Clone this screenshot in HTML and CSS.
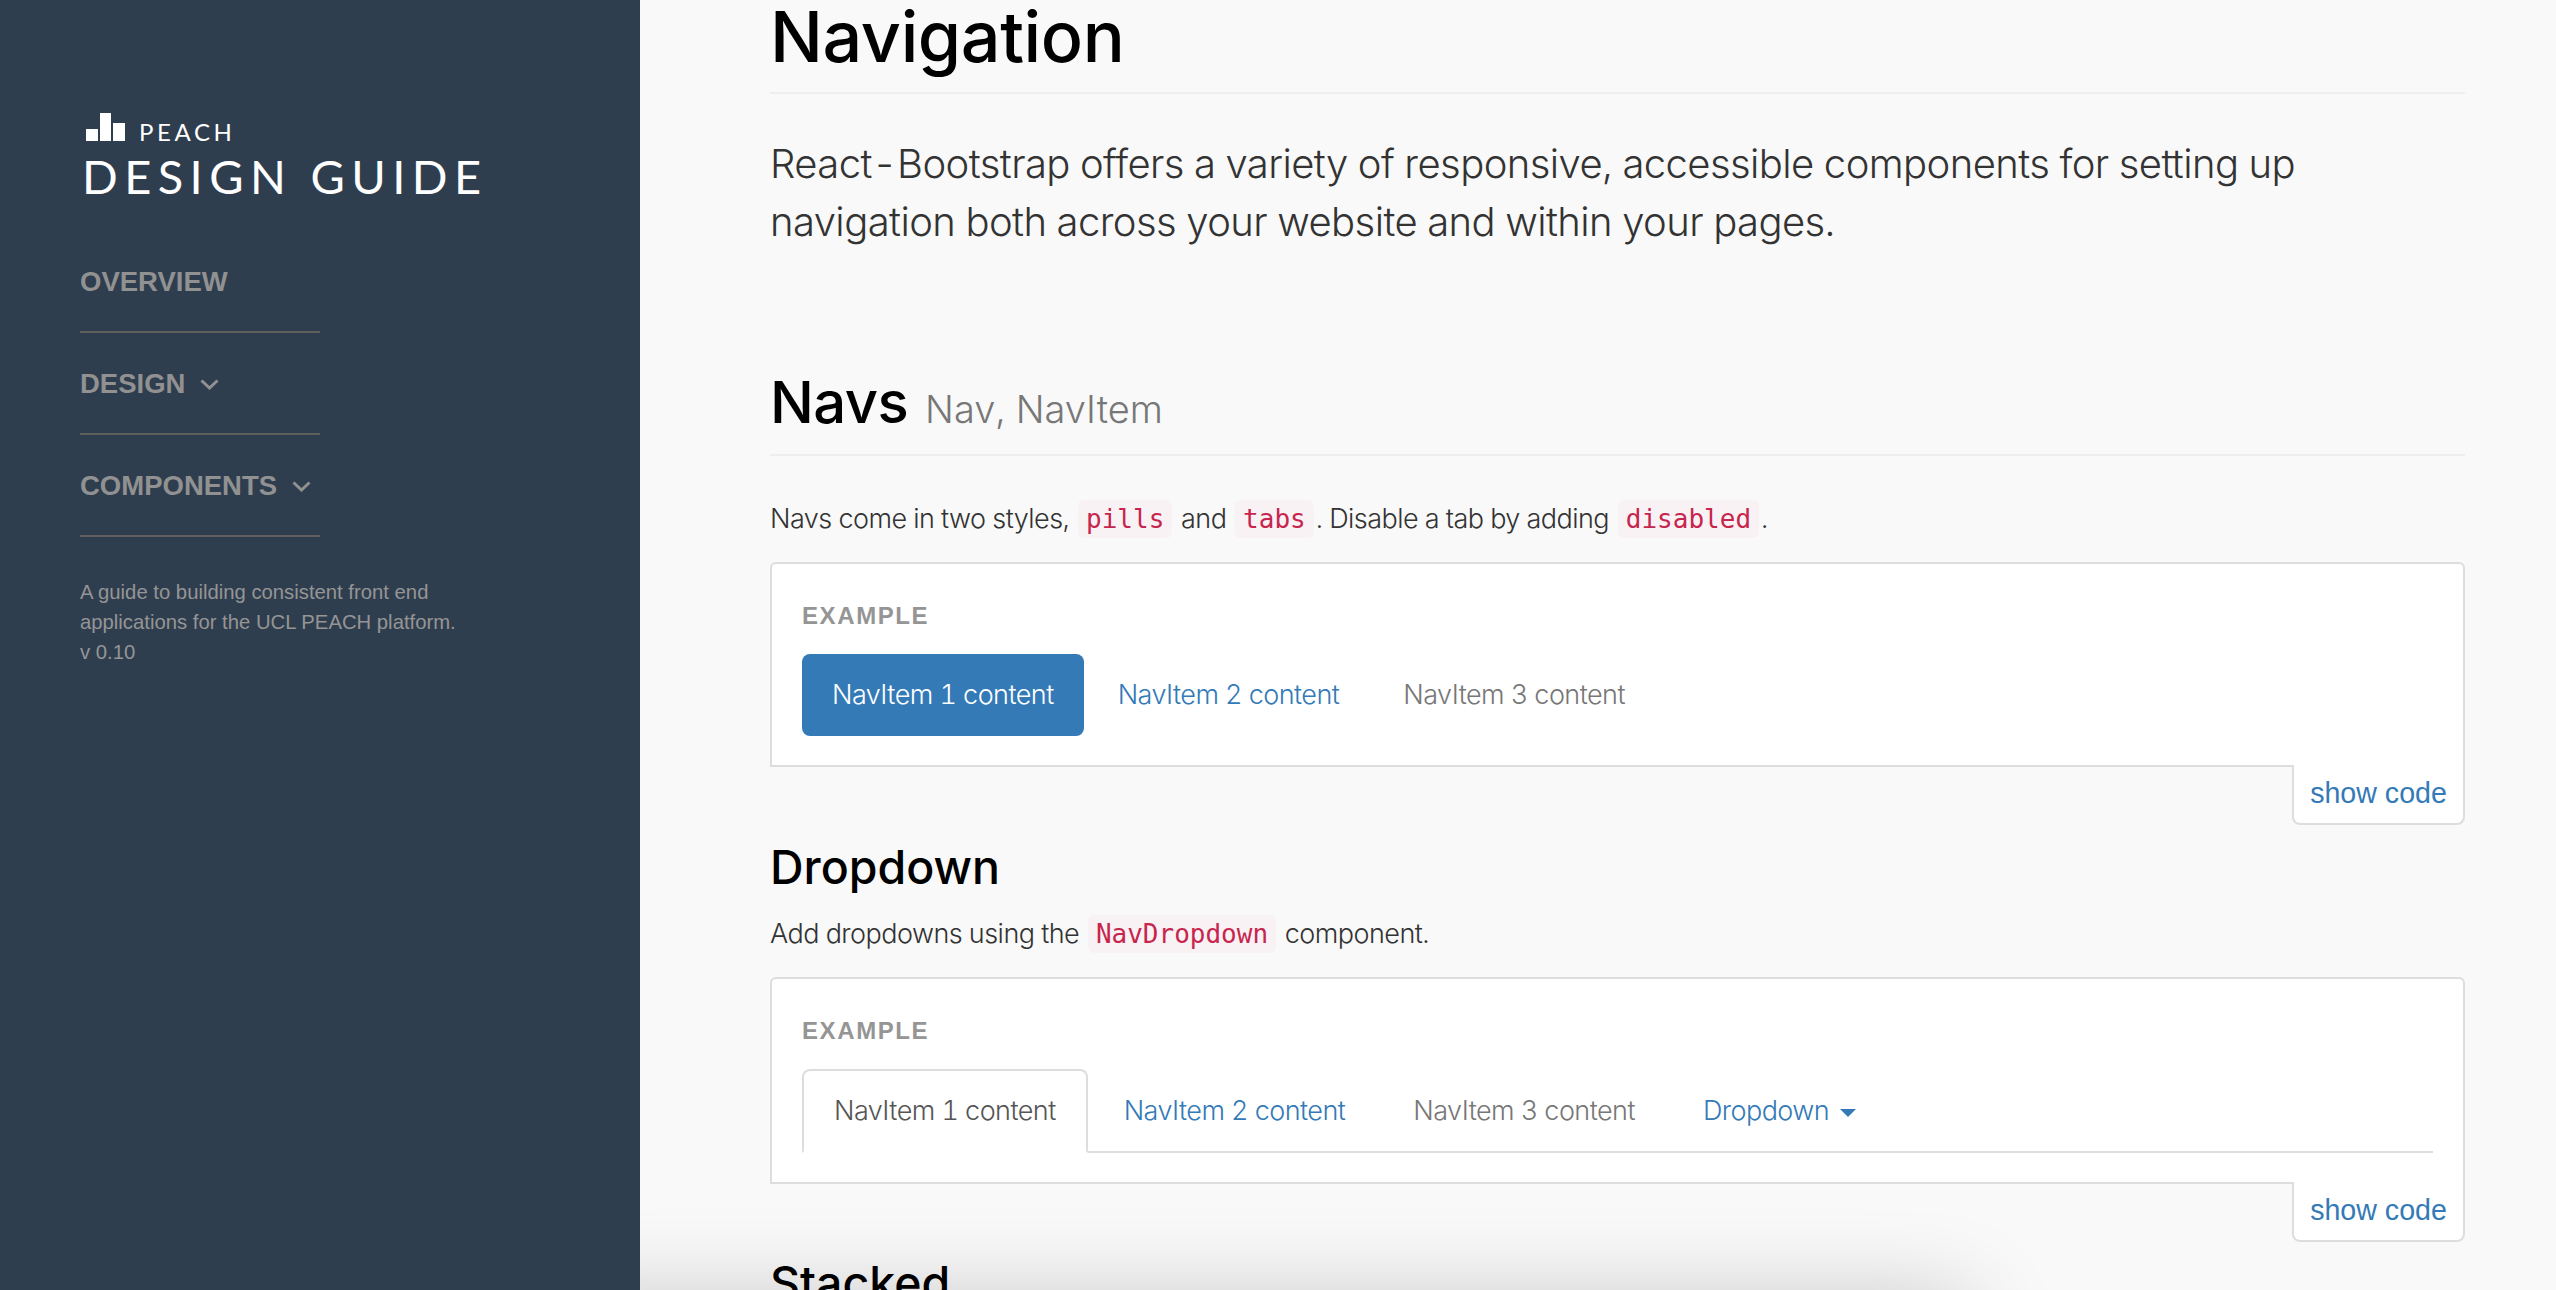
FILE: index.html
```html
<!DOCTYPE html>
<html lang="en">
<head>
<meta charset="utf-8">
<title>Navigation - Peach Design Guide</title>
<link rel="stylesheet" href="styles.css">
</head>
<body>
<div class="app">
  <aside class="sidebar">
    <div class="logo">
      <div class="logo-top">
        <svg class="logo-mark" width="40" height="28" viewBox="0 0 40 28" aria-hidden="true"><rect x="0" y="16" width="12" height="12"/><rect x="14" y="0" width="11" height="28"/><rect x="27" y="10" width="12" height="18"/></svg>
        <span class="logo-peach">PEACH</span>
      </div>
      <div class="logo-guide">DESIGN GUIDE</div>
    </div>
    <nav class="side-nav">
      <a class="side-item">OVERVIEW</a>
      <a class="side-item">DESIGN<svg class="chev" width="19" height="11" viewBox="0 0 19 11" aria-hidden="true"><path d="M1.5 1.5 9.5 9 17.5 1.5"/></svg></a>
      <a class="side-item">COMPONENTS<svg class="chev" width="19" height="11" viewBox="0 0 19 11" aria-hidden="true"><path d="M1.5 1.5 9.5 9 17.5 1.5"/></svg></a>
    </nav>
    <p class="side-note">A guide to building consistent front end<br>applications for the UCL PEACH platform.<br>v 0.10</p>
  </aside>
  <main class="main">
    <h1 class="page-title">Navigation</h1>
    <p class="lead">React-Bootstrap offers a variety of responsive, accessible components for setting up navigation both across your website and within your pages.</p>
    <h2 class="section-title">Navs <small>Nav, NavItem</small></h2>
    <p class="copy">Navs come in two styles, <code>pills</code> and <code>tabs</code>. Disable a tab by adding <code>disabled</code>.</p>
    <section class="example">
      <div class="example-label">EXAMPLE</div>
      <ul class="pills">
        <li class="pill active">NavItem 1 content</li>
        <li class="pill link">NavItem 2 content</li>
        <li class="pill muted">NavItem 3 content</li>
      </ul>
    </section>
    <div class="code-row"><a class="show-code">show code</a></div>
    <h3 class="sub-title">Dropdown</h3>
    <p class="copy copy-sub">Add dropdowns using the <code>NavDropdown</code> component.</p>
    <section class="example">
      <div class="example-label">EXAMPLE</div>
      <ul class="tabs">
        <li class="tab active">NavItem 1 content</li>
        <li class="tab link">NavItem 2 content</li>
        <li class="tab muted">NavItem 3 content</li>
        <li class="tab link">Dropdown<span class="caret"></span></li>
      </ul>
    </section>
    <div class="code-row"><a class="show-code">show code</a></div>
    <h3 class="sub-title stacked">Stacked</h3>
  </main>
</div>
<div class="bottom-shadow"></div>
</body>
</html>
```
FILE: styles.css
```css
* { box-sizing: border-box; }
html, body { margin: 0; height: 100%; overflow: hidden; }
body { background: #f9f9f9; font-family: "Liberation Sans", Arial, sans-serif; color: #333; }
.app { display: flex; height: 1290px; overflow: hidden; }

.sidebar { flex: 0 0 640px; background: #2f3e4f; padding: 113px 0 0 80px; position: relative; z-index: 2; }
.logo-top { display: flex; align-items: flex-end; margin-left: 6px; height: 28px; }
.logo-mark { fill: #fff; display: block; flex: none; }
.logo-peach { color: #fff; font-family: Lato, sans-serif; font-size: 24px; line-height: 18px; letter-spacing: 3.6px; margin-left: 13px; }
.logo-guide { color: #fff; font-family: Lato, sans-serif; font-size: 47px; line-height: 34px; letter-spacing: 6.4px; margin: 18px 0 0 2px; white-space: nowrap; }
.side-nav { display: flex; flex-direction: column; width: 240px; margin-top: 38px; }
.side-item { display: flex; align-items: center; height: 102px; padding-top: 2px; border-bottom: 2px solid #5f5f5f; color: #919191; font-weight: 700; font-size: 27.5px; white-space: nowrap; }
.chev { margin-left: 15px; flex: none; fill: none; stroke: #919191; stroke-width: 3; }
.side-note { margin: 40px 0 0; color: #959595; font-size: 20.3px; line-height: 30px; white-space: nowrap; }

.main { flex: 1; padding: 0 91px 0 130px; min-width: 0; font-family: Inter, "Liberation Sans", sans-serif; font-weight: 300; font-variant-numeric: tabular-nums; }
.page-title { margin: 0; height: 94px; border-bottom: 2px solid #eee; font-weight: 500; font-size: 70px; line-height: 74px; letter-spacing: -0.4px; color: #000; }
.lead { margin: 41px 0 0; font-size: 40px; line-height: 57.6px; letter-spacing: -0.58px; color: #333; }
.section-title { margin: 116px 0 0; height: 90px; border-bottom: 2px solid #eee; font-weight: 500; font-size: 58px; line-height: 72px; letter-spacing: -0.6px; color: #000; }
.section-title small { font-weight: 300; font-size: 38px; letter-spacing: 0; color: #777; margin-left: 2px; }
.copy { margin: 43px 0 0; font-size: 27px; line-height: 40px; letter-spacing: -0.54px; color: #333; }
.copy-sub { margin-top: 21px; }
code { font-family: "DejaVu Sans Mono", monospace; font-weight: 400; font-size: 26px; letter-spacing: 0; color: #c7254e; background: #f9f2f4; border-radius: 6px; padding: 4px 8px; margin: 0 2px; }
.example { margin-top: 23px; background: #fff; border: 2px solid #ddd; border-radius: 6px 6px 0 0; padding: 38px 30px 29px; }
.example-label { font-family: "Liberation Sans", sans-serif; font-weight: 700; font-size: 24px; line-height: 28px; letter-spacing: 1.6px; color: #959595; margin-bottom: 24px; }
.pills, .tabs { list-style: none; display: flex; margin: 0; padding: 0; font-size: 27px; letter-spacing: -0.55px; }
.pill { height: 82px; line-height: 82px; padding: 0 30px; border-radius: 8px; margin-right: 4px; }
.pill.active { background: #337ab7; color: #fff; }
.link { color: #337ab7; }
.muted { color: #777; }
.tabs { border-bottom: 2px solid #ddd; height: 84px; }
.tab { height: 84px; line-height: 80px; padding: 0 30px; margin-right: 4px; border: 2px solid transparent; border-radius: 8px 8px 0 0; }
.tab.active { background: #fff; border-color: #ddd; border-bottom-color: #fff; color: #555; }
.caret { display: inline-block; vertical-align: middle; margin-left: 11px; border-top: 8px solid #337ab7; border-left: 8px solid transparent; border-right: 8px solid transparent; }
.code-row { display: flex; justify-content: flex-end; margin-top: -2px; }
.show-code { position: relative; width: 173px; height: 60px; line-height: 57px; text-align: center; background: #fff; border: 2px solid #ddd; border-top: 0; border-radius: 0 0 8px 8px; color: #337ab7; font-family: "Liberation Sans", sans-serif; font-size: 28.6px; }
.sub-title { margin: 0; font-weight: 500; font-size: 46.5px; line-height: 52px; color: #000; padding-top: 16px; }
.stacked { padding-top: 0; margin-top: 15px; }

.bottom-shadow { position: absolute; left: 560px; top: 1310px; width: 1400px; height: 60px; box-shadow: 0 0 90px 10px rgba(0,0,0,.22); z-index: 1; }
```
